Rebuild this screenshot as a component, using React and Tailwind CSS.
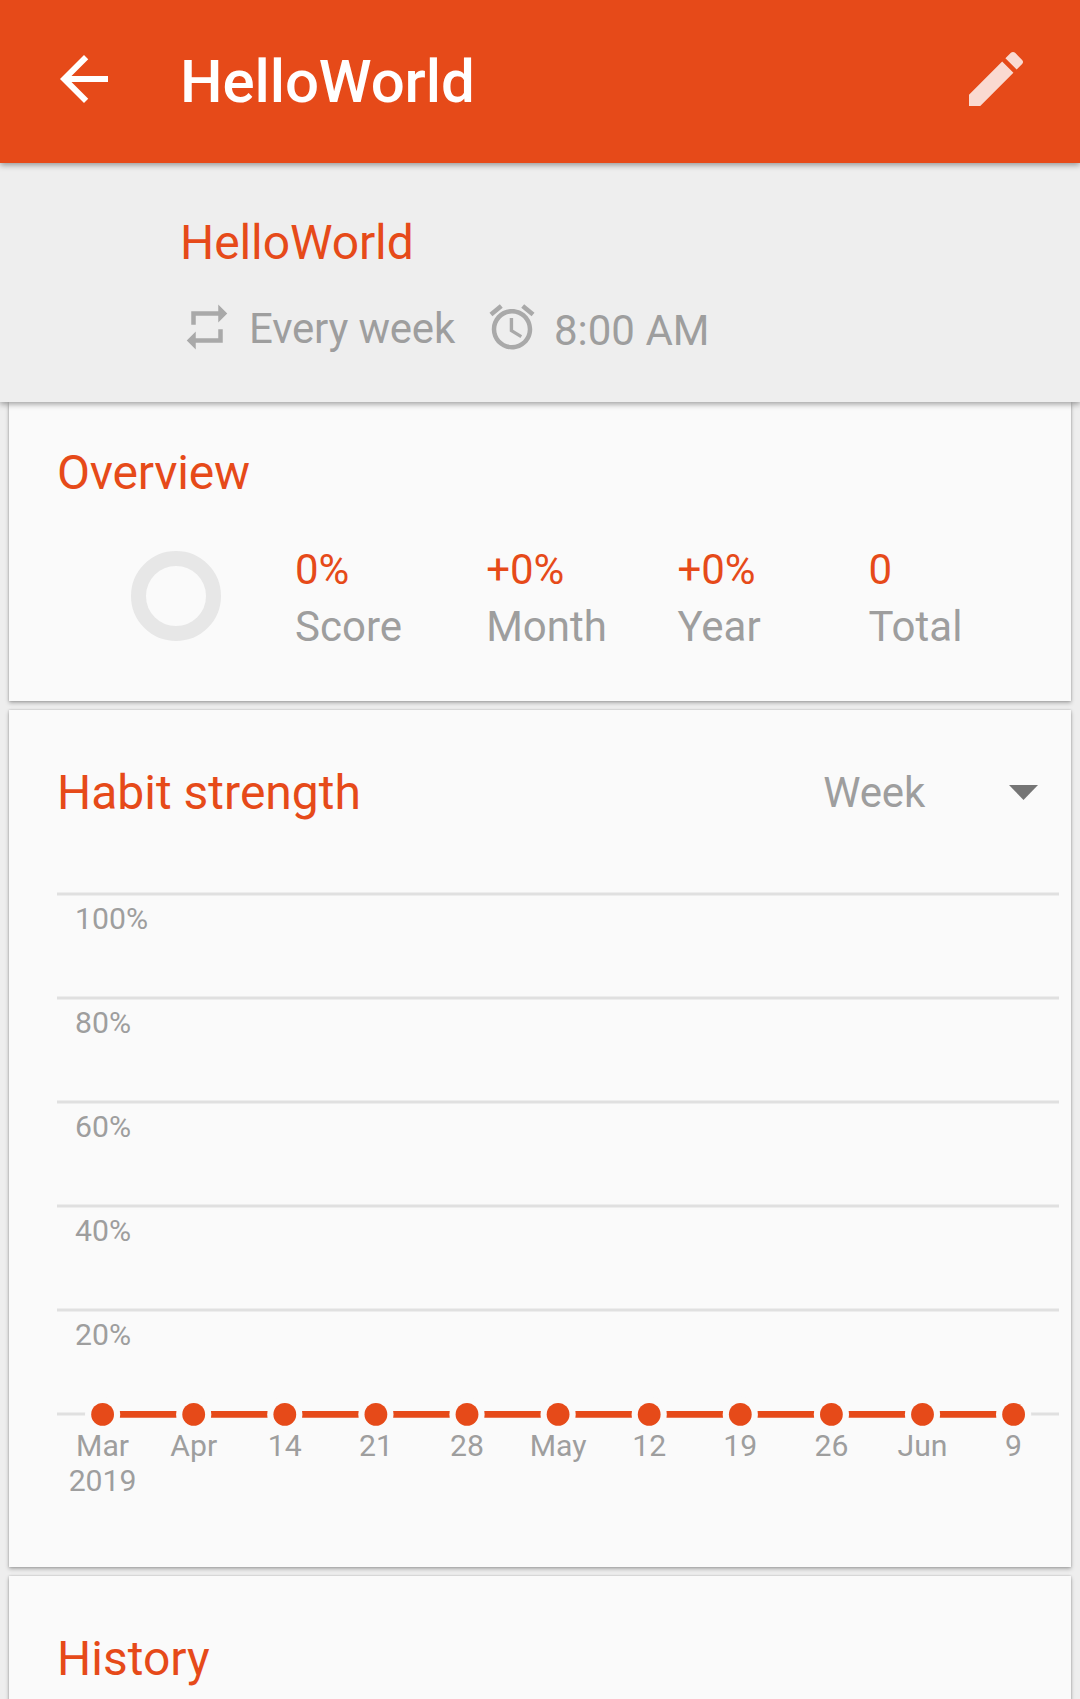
const stats = [
  { value: "0%", label: "Score" },
  { value: "+0%", label: "Month" },
  { value: "+0%", label: "Year" },
  { value: "0", label: "Total" },
];

const levels = ["100%", "80%", "60%", "40%", "20%"];
const weeks = ["Mar", "Apr", "14", "21", "28", "May", "12", "19", "26", "Jun", "9"];

function Icon({ d, className }) {
  return (
    <svg viewBox="0 0 24 24" fill="currentColor" className={className}>
      <path d={d} />
    </svg>
  );
}

const BACK = "M20 11H7.83l5.59-5.59L12 4l-8 8 8 8 1.41-1.41L7.83 13H20v-2z";
const EDIT =
  "M3 17.25V21h3.75L17.81 9.94l-3.75-3.75L3 17.25zM20.71 7.04c.39-.39.39-1.02 0-1.41l-2.34-2.34c-.39-.39-1.02-.39-1.41 0l-1.83 1.83 3.75 3.75 1.83-1.83z";
const REPEAT = "M7 7h10v3l4-4-4-4v3H5v6h2V7zm10 10H7v-3l-4 4 4 4v-3h12v-6h-2v4z";
const ALARM =
  "M22 5.72l-4.6-3.86-1.29 1.53 4.6 3.86L22 5.72zM7.88 3.39L6.6 1.86 2 5.71l1.29 1.53 4.59-3.85zM12.5 8H11v6l4.75 2.85.75-1.23-4-2.37V8zM12 4c-4.97 0-9 4.03-9 9s4.02 9 9 9c4.97 0 9-4.03 9-9s-4.03-9-9-9zm0 16c-3.87 0-7-3.13-7-7s3.13-7 7-7 7 3.13 7 7-3.13 7-7 7z";

function Card({ className, children }) {
  return (
    <section
      className={
        "mx-[9px] bg-[#fafafa] shadow-[0_0_2px_rgba(0,0,0,0.2),0_2px_4px_rgba(0,0,0,0.28)] " + className
      }
    >
      {children}
    </section>
  );
}

function Heading({ className = "", children }) {
  return <h2 className={"text-[48px] leading-[56px] text-[#e64a19] " + className}>{children}</h2>;
}

function StrengthChart() {
  const x = (i) => 45.6 + i * 91.1;
  const base = 534.4;
  return (
    <svg width="1002" height="640" className="block text-[30.2px]" textAnchor="middle">
      {levels.map((label, i) => (
        <g key={label}>
          <line x1="0" x2="1002" y1={14 + i * 104} y2={14 + i * 104} stroke="#e0e0e0" strokeWidth="3" />
          <text x="18" y={49 + i * 104} textAnchor="start" fill="#9e9e9e">
            {label}
          </text>
        </g>
      ))}
      <line x1="0" x2="1002" y1="534" y2="534" stroke="#e0e0e0" strokeWidth="3" />
      <line x1={x(0)} x2={x(10)} y1={base} y2={base} stroke="#e64a19" strokeWidth="6.6" />
      {weeks.map((label, i) => (
        <g key={label}>
          <circle cx={x(i)} cy={base} r="17.6" fill="#fafafa" />
          <circle cx={x(i)} cy={base} r="11.4" fill="#e64a19" />
          <text x={x(i)} y="576" fill="#9e9e9e">
            {label}
          </text>
        </g>
      ))}
      <text x={x(0)} y="611" fill="#9e9e9e">
        2019
      </text>
    </svg>
  );
}

export default function App() {
  return (
    <div className="flex h-[1699px] w-[1080px] flex-col overflow-hidden bg-[#eeeeee] font-['Roboto',sans-serif]">
      <header className="z-20 flex h-[163px] shrink-0 items-center bg-[#e64a19] pr-12 pl-12 text-white shadow-[0_2px_6px_rgba(0,0,0,0.38)]">
        <Icon d={BACK} className="-mt-[5px] size-[72px]" />
        <h1 className="ml-[60px] text-[60px] leading-[60px] font-medium tracking-[-0.1px]">HelloWorld</h1>
        <Icon d={EDIT} className="-mt-[5px] ml-auto size-[72px] opacity-80" />
      </header>

      <div className="z-10 h-[239px] shrink-0 bg-[#eeeeee] pt-[52px] pl-[180px] shadow-[0_2px_6px_rgba(0,0,0,0.38)]">
        <Heading className="tracking-[-0.1px]">HelloWorld</Heading>
        <div className="mt-[29px] flex items-start text-[42px] leading-[50px] text-[#9e9e9e]">
          <Icon d={REPEAT} className="size-[54px] text-[#a9a9a9]" />
          <span className="ml-[15px] pt-[4px] tracking-[-0.2px]">Every week</span>
          <Icon d={ALARM} className="ml-[30px] size-[54px] text-[#a9a9a9]" />
          <span className="ml-[15px] pt-[6px]">8:00 AM</span>
        </div>
      </div>

      <Card className="h-[299px] shrink-0 pt-[43px] pl-[48px]">
        <Heading className="tracking-[-0.2px]">Overview</Heading>
        <div className="mt-[40px] flex pl-[74px]">
          <svg width="90" height="90" viewBox="0 0 90 90" className="mt-[10px] mr-[74px]">
            <circle cx="45" cy="45" r="37.5" fill="none" stroke="#e7e7e7" strokeWidth="15" />
          </svg>
          {stats.map((s) => (
            <div key={s.label} className="w-[191.2px] text-[42px] leading-[57px]">
              <div className="text-[#e64a19]">{s.value}</div>
              <div className="text-[#9e9e9e]">{s.label}</div>
            </div>
          ))}
        </div>
      </Card>

      <Card className="mt-[9px] h-[857px] shrink-0 pt-[55px] pl-[48px]">
        <div className="flex items-center pr-[33px]">
          <Heading>Habit strength</Heading>
          <span className="ml-auto text-[42px] leading-[50px] tracking-[-0.2px] text-[#9e9e9e]">Week</span>
          <svg width="29" height="15" viewBox="0 0 29 15" className="-mt-px ml-[84px]">
            <path d="M0 0h29L14.5 15z" fill="#757575" />
          </svg>
        </div>
        <div className="mt-[59px]">
          <StrengthChart />
        </div>
      </Card>

      <Card className="mt-[9px] h-[200px] shrink-0 pt-[55px] pl-[48px]">
        <Heading>History</Heading>
      </Card>
    </div>
  );
}
